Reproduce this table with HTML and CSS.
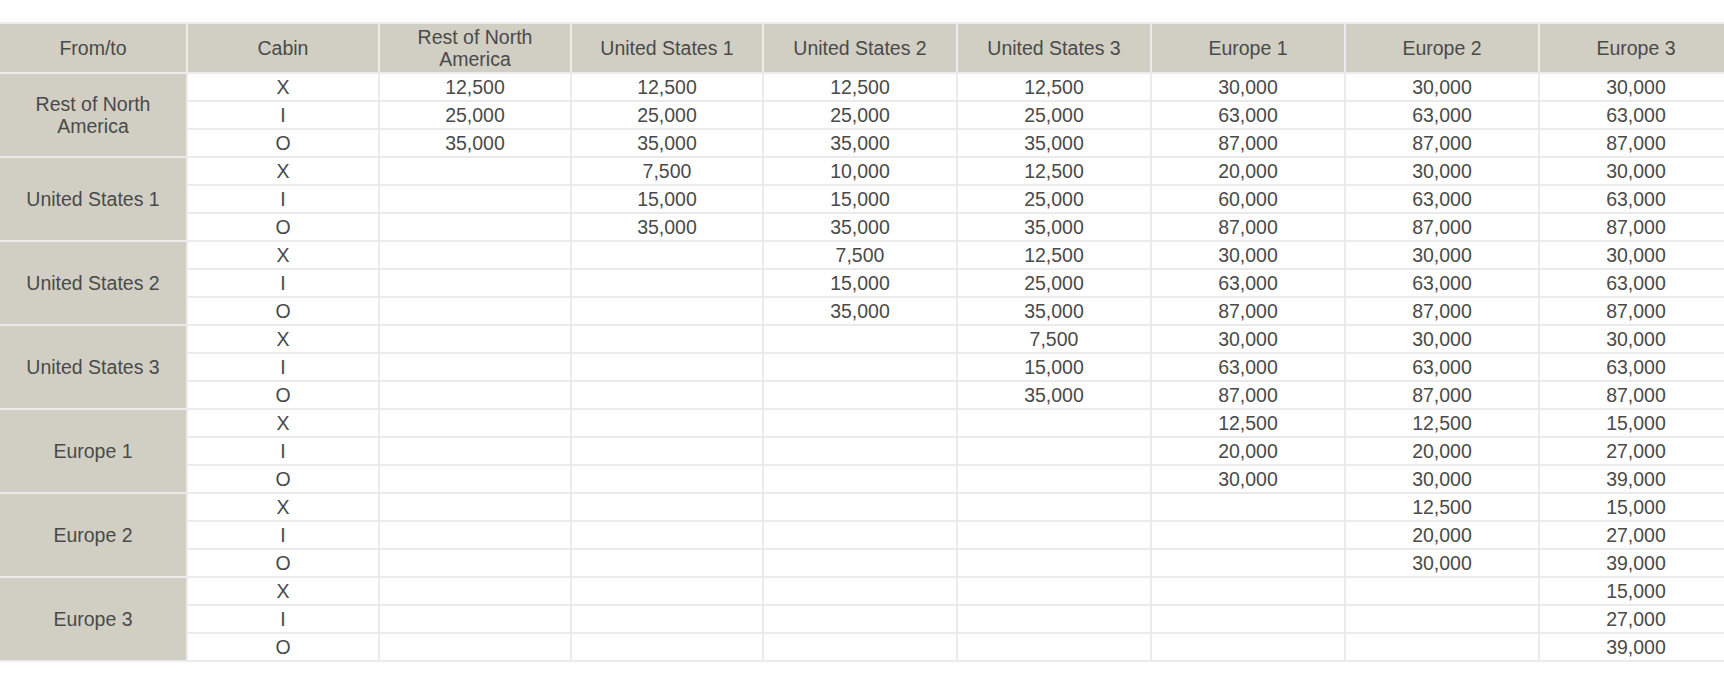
FILE: index.html
```html
<!DOCTYPE html>
<html>
<head>
<meta charset="utf-8">
<link rel="stylesheet" href="styles.css">
</head>
<body>
<div class="wrap">
<table class="fares">
<thead>
<tr>
<th class="c-from">From/to</th>
<th class="c-narrow">Cabin</th>
<th class="c-narrow">Rest of North America</th>
<th class="c-narrow">United States 1</th>
<th class="c-wide">United States 2</th>
<th class="c-wide">United States 3</th>
<th class="c-wide">Europe 1</th>
<th class="c-wide">Europe 2</th>
<th class="c-wide">Europe 3</th>
</tr>
</thead>
<tbody>
<tr><th rowspan="3" class="region">Rest of North America</th><td>X</td><td>12,500</td><td>12,500</td><td>12,500</td><td>12,500</td><td>30,000</td><td>30,000</td><td>30,000</td></tr>
<tr><td>I</td><td>25,000</td><td>25,000</td><td>25,000</td><td>25,000</td><td>63,000</td><td>63,000</td><td>63,000</td></tr>
<tr><td>O</td><td>35,000</td><td>35,000</td><td>35,000</td><td>35,000</td><td>87,000</td><td>87,000</td><td>87,000</td></tr>

<tr><th rowspan="3" class="region">United States 1</th><td>X</td><td></td><td>7,500</td><td>10,000</td><td>12,500</td><td>20,000</td><td>30,000</td><td>30,000</td></tr>
<tr><td>I</td><td></td><td>15,000</td><td>15,000</td><td>25,000</td><td>60,000</td><td>63,000</td><td>63,000</td></tr>
<tr><td>O</td><td></td><td>35,000</td><td>35,000</td><td>35,000</td><td>87,000</td><td>87,000</td><td>87,000</td></tr>

<tr><th rowspan="3" class="region">United States 2</th><td>X</td><td></td><td></td><td>7,500</td><td>12,500</td><td>30,000</td><td>30,000</td><td>30,000</td></tr>
<tr><td>I</td><td></td><td></td><td>15,000</td><td>25,000</td><td>63,000</td><td>63,000</td><td>63,000</td></tr>
<tr><td>O</td><td></td><td></td><td>35,000</td><td>35,000</td><td>87,000</td><td>87,000</td><td>87,000</td></tr>

<tr><th rowspan="3" class="region">United States 3</th><td>X</td><td></td><td></td><td></td><td>7,500</td><td>30,000</td><td>30,000</td><td>30,000</td></tr>
<tr><td>I</td><td></td><td></td><td></td><td>15,000</td><td>63,000</td><td>63,000</td><td>63,000</td></tr>
<tr><td>O</td><td></td><td></td><td></td><td>35,000</td><td>87,000</td><td>87,000</td><td>87,000</td></tr>

<tr><th rowspan="3" class="region">Europe 1</th><td>X</td><td></td><td></td><td></td><td></td><td>12,500</td><td>12,500</td><td>15,000</td></tr>
<tr><td>I</td><td></td><td></td><td></td><td></td><td>20,000</td><td>20,000</td><td>27,000</td></tr>
<tr><td>O</td><td></td><td></td><td></td><td></td><td>30,000</td><td>30,000</td><td>39,000</td></tr>

<tr><th rowspan="3" class="region">Europe 2</th><td>X</td><td></td><td></td><td></td><td></td><td></td><td>12,500</td><td>15,000</td></tr>
<tr><td>I</td><td></td><td></td><td></td><td></td><td></td><td>20,000</td><td>27,000</td></tr>
<tr><td>O</td><td></td><td></td><td></td><td></td><td></td><td>30,000</td><td>39,000</td></tr>

<tr><th rowspan="3" class="region">Europe 3</th><td>X</td><td></td><td></td><td></td><td></td><td></td><td></td><td>15,000</td></tr>
<tr><td>I</td><td></td><td></td><td></td><td></td><td></td><td></td><td>27,000</td></tr>
<tr><td>O</td><td></td><td></td><td></td><td></td><td></td><td></td><td>39,000</td></tr>
</tbody>
</table>
</div>
</body>
</html>
```

FILE: styles.css
```css
html, body {
  margin: 0;
  padding: 0;
  background: #ffffff;
  overflow: hidden;
}

.wrap {
  padding-top: 22px;
  width: 1724px;
  overflow: hidden;
}

.fares {
  border-collapse: separate;
  border-spacing: 0;
  table-layout: fixed;
  width: 1734px;
  border-top: 2px solid #ebebeb;
  font-family: "Liberation Sans", Arial, Helvetica, sans-serif;
  font-size: 19.5px;
  color: #4a4a4a;
}

.fares th,
.fares td {
  box-sizing: border-box;
  border-right: 2px solid #ebebeb;
  border-bottom: 2px solid #ebebeb;
  padding: 0 4px;
  text-align: center;
  vertical-align: middle;
  font-weight: normal;
}

.fares thead th {
  background: #d1cfc3;
  height: 50px;
  line-height: 22px;
  padding-top: 2px;
  padding-bottom: 2px;
}

.fares td {
  height: 28px;
  line-height: 22px;
}

.fares .region {
  background: #d1cfc3;
  line-height: 22px;
}

.c-from { width: 188px; }
.c-narrow { width: 192px; }
.c-wide { width: 194px; }
```
